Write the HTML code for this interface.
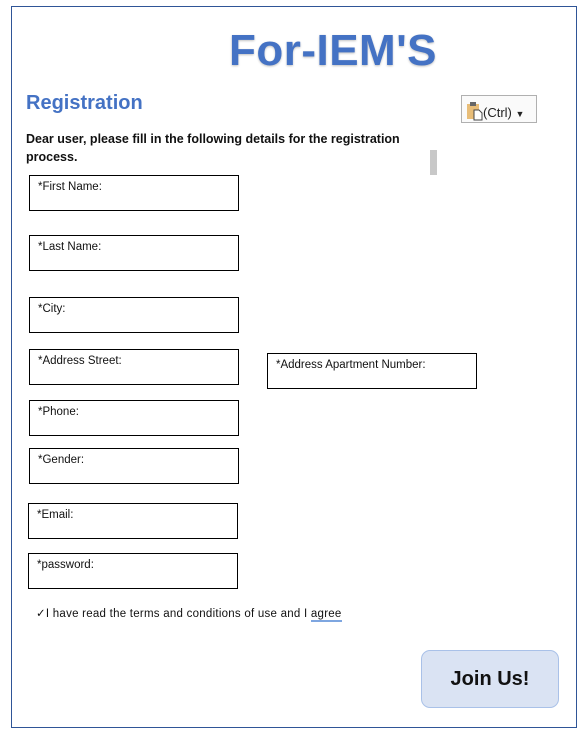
<!DOCTYPE html>
<html><head><meta charset="utf-8"><style>
*{margin:0;padding:0;box-sizing:border-box}
body{width:588px;height:740px;background:#fff;position:relative;font-family:"Liberation Sans",sans-serif;overflow:hidden}
.frame{position:absolute;left:11px;top:6px;width:566px;height:722px;border:1px solid #2f5597}
.a{position:absolute}
.box{position:absolute;border:1px solid #000;width:210px;height:36px;font-size:11.5px;padding:5px 0 0 8px;color:#111;letter-spacing:0}
</style></head><body>
<div class="frame"></div>
<div class="a" style="left:0;width:666px;top:26px;text-align:center;font-size:44px;font-weight:bold;color:#4472c4;letter-spacing:0.5px;text-shadow:0 1px 2px rgba(0,0,0,.25)">For-IEM'S</div>
<div class="a" style="left:26px;top:92px;font-size:20px;font-weight:bold;color:#4472c4">Registration</div>
<div class="a" style="left:461px;top:95px;width:76px;height:28px;border:1px solid #b0b0b0;background:#fafafa;font-size:13px;color:#222;padding:5px 0 0 4px">
<svg width="17" height="20" style="vertical-align:-4px" viewBox="0 0 17 20"><rect x="1" y="3" width="12" height="15" fill="#e8bd78"/><rect x="4" y="1" width="6" height="4" fill="#666"/><path d="M8 9h5l3 3v7H8z" fill="#fff" stroke="#444"/></svg>(Ctrl) <span style="font-size:9px">&#9660;</span></div>
<div class="a" style="left:26px;top:130px;width:400px;font-size:12.5px;font-weight:bold;line-height:18px;color:#111">Dear user, please fill in the following details for the registration process.</div>
<div class="a" style="left:430px;top:150px;width:7px;height:25px;background:#c8c8c8"></div>
<div class="box" style="left:29px;top:175px">*First Name:</div>
<div class="box" style="left:29px;top:235px">*Last Name:</div>
<div class="box" style="left:29px;top:297px">*City:</div>
<div class="box" style="left:29px;top:349px">*Address Street:</div>
<div class="box" style="left:267px;top:353px">*Address Apartment Number:</div>
<div class="box" style="left:29px;top:400px">*Phone:</div>
<div class="box" style="left:29px;top:448px">*Gender:</div>
<div class="box" style="left:28px;top:503px">*Email:</div>
<div class="box" style="left:28px;top:553px">*password:</div>
<div class="a" style="left:36px;top:606px;font-size:11.5px;color:#111;letter-spacing:0.25px">&#10003;I have read the terms and conditions of use and I <span style="border-bottom:2px solid #7ea6e0">agree</span></div>
<div class="a" style="left:421px;top:650px;width:138px;height:58px;background:#dae3f3;border:1px solid #a9c1e8;border-radius:9px;text-align:center;line-height:56px;font-size:20px;font-weight:bold;color:#111">Join Us!</div>
</body></html>
